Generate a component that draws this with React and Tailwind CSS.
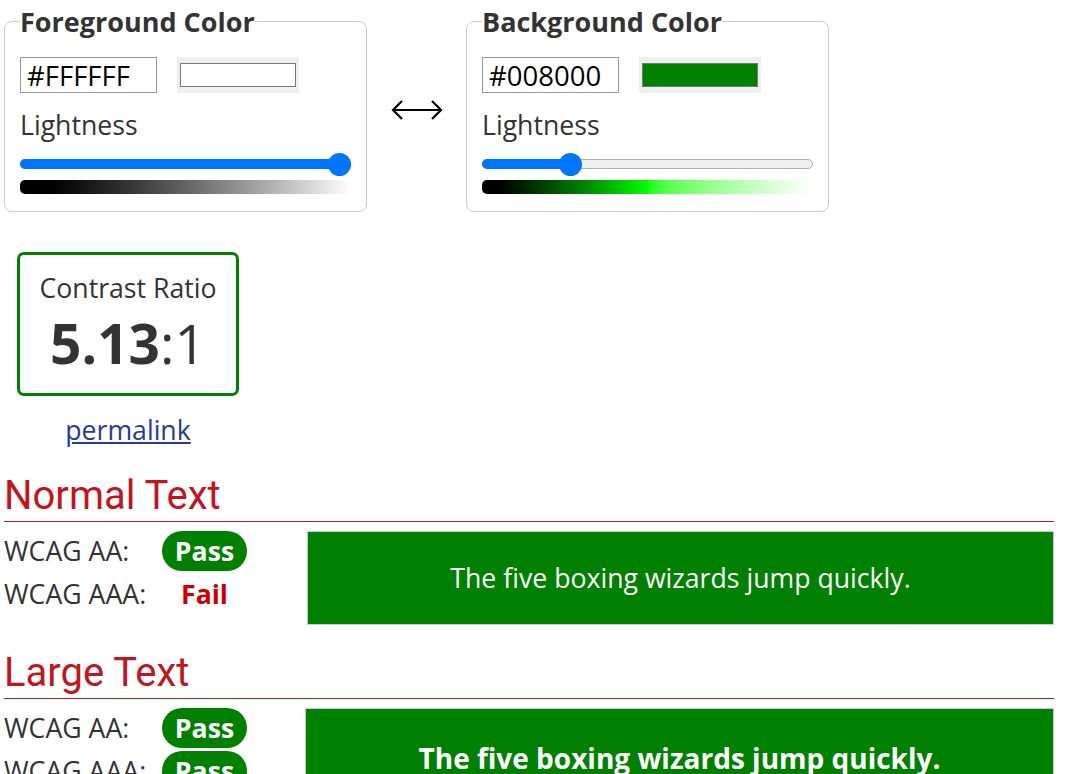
import React from "react";

const base = "[font-family:'Open_Sans',sans-serif]";

function Slider({ pct, full }) {
  return (
    <div className="relative mt-[10px] h-[22px] w-full">
      <div className="absolute left-0 right-0 top-[6px] h-[10px] rounded-full border border-[#b2b2b2] bg-[#efefef]" />
      <div
        className="absolute left-0 top-[6px] h-[10px] rounded-full bg-[#0075ff]"
        style={{ width: full ? "100%" : `calc((100% - 23px) * ${pct} + 11px)` }}
      />
      <div
        className="absolute top-[-0.5px] h-[23px] w-[23px] rounded-full bg-[#0075ff]"
        style={{ left: `calc((100% - 23px) * ${pct})` }}
      />
    </div>
  );
}

function ColorFieldset({ title, hex, swatch, pct, gradient }) {
  return (
    <fieldset className="w-[363px] rounded-[8px] border border-[#cccccc] px-[15px] pb-[17px] pt-0">
      <legend className="p-0 pt-[2px] text-[27px] font-bold leading-[40px] text-[#333333]">{title}</legend>
      <div className="mt-[15px] flex items-center gap-[20px]">
        <input
          readOnly
          value={hex}
          className="h-[36px] w-[137px] border border-[#999999] bg-white px-[6px] text-[27.5px] leading-none text-black outline-none"
        />
        <div className="flex h-[36px] w-[122px] items-center bg-[#efefef] px-[3px]">
          <div className={`h-[24px] w-full border border-[#777777] ${swatch}`} />
        </div>
      </div>
      <div className="mt-[14px] text-[26.67px] leading-[36px] text-[#333333]">Lightness</div>
      <Slider pct={pct} full={pct === 1} />
      <div className={`mt-[5px] h-[14px] w-full rounded-[5px] ${gradient}`} />
    </fieldset>
  );
}

function Badge({ children }) {
  return (
    <span className="inline-block rounded-full bg-[#008000] px-[13px] py-[2px] text-[26.67px] font-bold leading-[36px] text-white">
      {children}
    </span>
  );
}

function Section({ title, rows, sample, bold }) {
  return (
    <section className="mt-[24px]">
      <h2 className="border-b border-[#a8202a] pb-[1px] [font-family:Roboto,sans-serif] text-[40px] leading-[48px] font-normal text-[#c0161f]">
        {title}
      </h2>
      <div className="mt-[9px] flex items-start">
        <div className="flex flex-col gap-[3px]">
          {rows.map(([label, status]) => (
            <div key={label} className="flex h-[40px] items-center">
              <div className="w-[158px] text-[26.67px] leading-[36px] text-[#333333]">{label}</div>
              <div className="flex w-[85px] justify-center">
                {status === "Pass" ? (
                  <Badge>Pass</Badge>
                ) : (
                  <span className="text-[26.67px] font-bold leading-[36px] text-[#cc0000]">{status}</span>
                )}
              </div>
            </div>
          ))}
        </div>
        {bold ? (
          <div className="ml-[58px] flex h-[100px] flex-1 items-center justify-center border border-[#cccccc] bg-[#008000] text-[28px] font-bold leading-[36px] text-white">
            {sample}
          </div>
        ) : (
          <div className="ml-[60px] flex h-[94px] flex-1 items-center justify-center border border-[#cccccc] bg-[#008000] text-[26.67px] leading-[36px] text-white">
            {sample}
          </div>
        )}
      </div>
    </section>
  );
}

export default function App() {
  return (
    <div className={`${base} h-[774px] w-[1080px] overflow-hidden bg-white pl-[4px] pt-0 text-[#333333]`}>
      <div className="w-[1050px]">
        <div className="flex items-center">
          <ColorFieldset
            title="Foreground Color"
            hex="#FFFFFF"
            swatch="bg-white"
            pct={1}
            gradient="bg-linear-to-r from-black to-white"
          />
          <div className="flex w-[99px] justify-center pt-[8px]">
            <svg width="52" height="24" viewBox="0 0 52 24" fill="none" stroke="#000" strokeWidth="2.2" strokeLinecap="butt" strokeLinejoin="miter">
              <path d="M2 12H50" />
              <path d="M11 3L2 12L11 21" />
              <path d="M41 3L50 12L41 21" />
            </svg>
          </div>
          <ColorFieldset
            title="Background Color"
            hex="#008000"
            swatch="bg-[#008000]"
            pct={0.25}
            gradient="bg-linear-to-r from-black via-[#00ff00] to-white"
          />
        </div>

        <div className="mt-[40px] flex w-[248px] flex-col items-center">
          <div className="flex h-[144px] w-[222px] flex-col items-center rounded-[7px] border-[3px] border-[#008000] pt-[15px]">
            <div className="text-[26.67px] leading-[36px] text-[#333333]">Contrast Ratio</div>
            <div className="mt-[9px] text-[55px] leading-[55px] text-[#333333]">
              <span className="font-bold">5.13</span>:1
            </div>
          </div>
          <a href="#" className="mt-[16px] text-[26.67px] leading-[36px] text-[#233c98] underline">
            permalink
          </a>
        </div>

        <Section
          title="Normal Text"
          rows={[
            ["WCAG AA:", "Pass"],
            ["WCAG AAA:", "Fail"],
          ]}
          sample="The five boxing wizards jump quickly."
        />
        <Section
          title="Large Text"
          rows={[
            ["WCAG AA:", "Pass"],
            ["WCAG AAA:", "Pass"],
          ]}
          sample="The five boxing wizards jump quickly."
          bold
        />
      </div>
    </div>
  );
}
